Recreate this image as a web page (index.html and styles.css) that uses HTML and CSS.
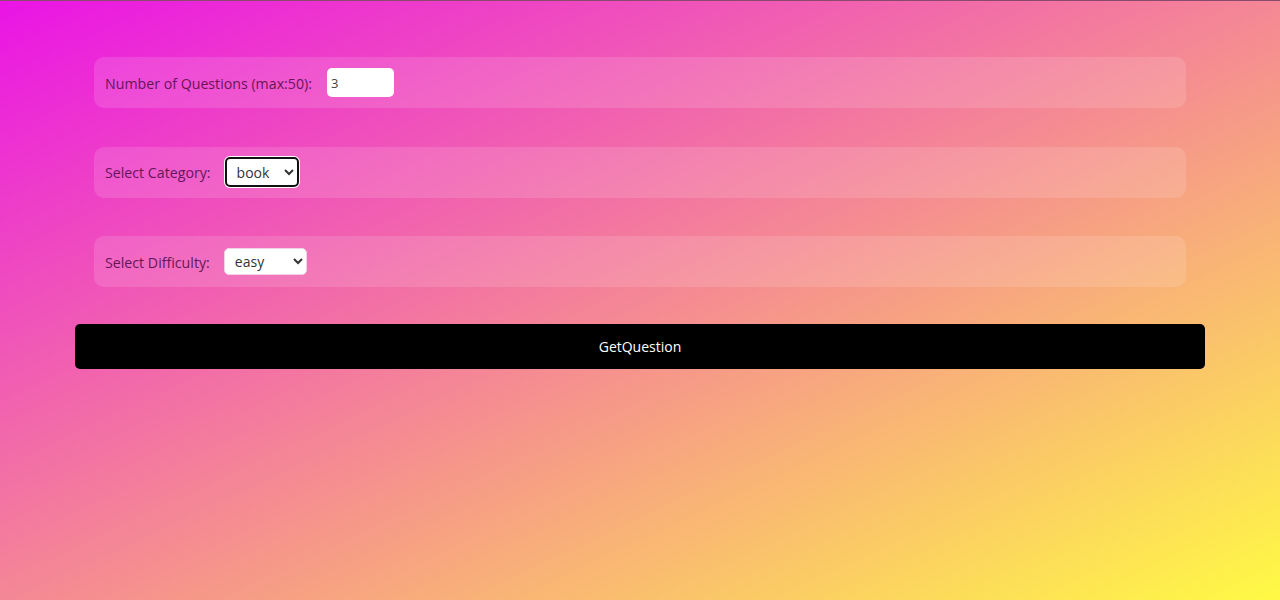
FILE: index.html
```html
<!DOCTYPE html>
<html lang="en">
<head>
<meta charset="utf-8">
<title>Quiz Settings</title>
<link rel="stylesheet" href="styles.css">
</head>
<body>
<div class="topline"></div>
<main class="page">
  <form class="settings">
    <div class="field">
      <label class="label" for="num">Number of Questions (max:50):</label>
      <input class="num-input" id="num" type="text" value="3">
    </div>
    <div class="field">
      <label class="label" for="cat">Select Category:</label>
      <select class="select select-cat focused" id="cat">
        <option>book</option>
      </select>
    </div>
    <div class="field">
      <label class="label" for="diff">Select Difficulty:</label>
      <select class="select select-diff" id="diff">
        <option>easy</option>
      </select>
    </div>
    <button class="submit" type="button">GetQuestion</button>
  </form>
</main>
</body>
</html>
```

FILE: styles.css
```css
html, body {
  margin: 0;
  padding: 0;
  height: 100%;
}

body {
  background: linear-gradient(to bottom right, #ea14e6, #fffa44);
  font-family: "Open Sans", "Noto Sans", sans-serif;
  font-size: 14px;
  overflow: hidden;
}

.topline {
  height: 1px;
  background: #8a4a6e;
}

.page {
  width: 1130px;
  margin: 0 auto;
  padding-top: 56px;
}

.settings {
  display: flex;
  flex-direction: column;
  gap: 38.5px;
}

.field {
  margin: 0 19px;
  height: 51px;
  box-sizing: border-box;
  padding: 0 11px;
  display: flex;
  align-items: center;
  gap: 14px;
  background: rgba(255, 255, 255, 0.13);
  border-radius: 10px;
}

.label {
  color: #661658;
  font-size: 14.2px;
  padding-top: 1px;
}

.num-input {
  width: 67px;
  height: 29px;
  box-sizing: border-box;
  border: none;
  border-radius: 5px;
  background: #fff;
  padding: 0 4px;
  font-family: inherit;
  font-size: 13px;
  color: #444;
  margin-left: 1px;
}

.select {
  box-sizing: border-box;
  border-radius: 5px;
  background: #fff;
  font-family: inherit;
  font-size: 14px;
  color: #333;
  padding: 0 4px 0 6px;
}

.select-cat {
  width: 74px;
  height: 30px;
  border: 2px solid #111;
  box-shadow: 0 0 0 1px #fff;
}

.select-diff {
  width: 83px;
  height: 27px;
  border: 1px solid #f3d2e6;
}

.submit {
  margin-top: -1.5px;
  height: 45px;
  border: none;
  border-radius: 5px;
  background: #000;
  color: #fff;
  font-family: inherit;
  font-size: 14px;
  cursor: pointer;
}
```
